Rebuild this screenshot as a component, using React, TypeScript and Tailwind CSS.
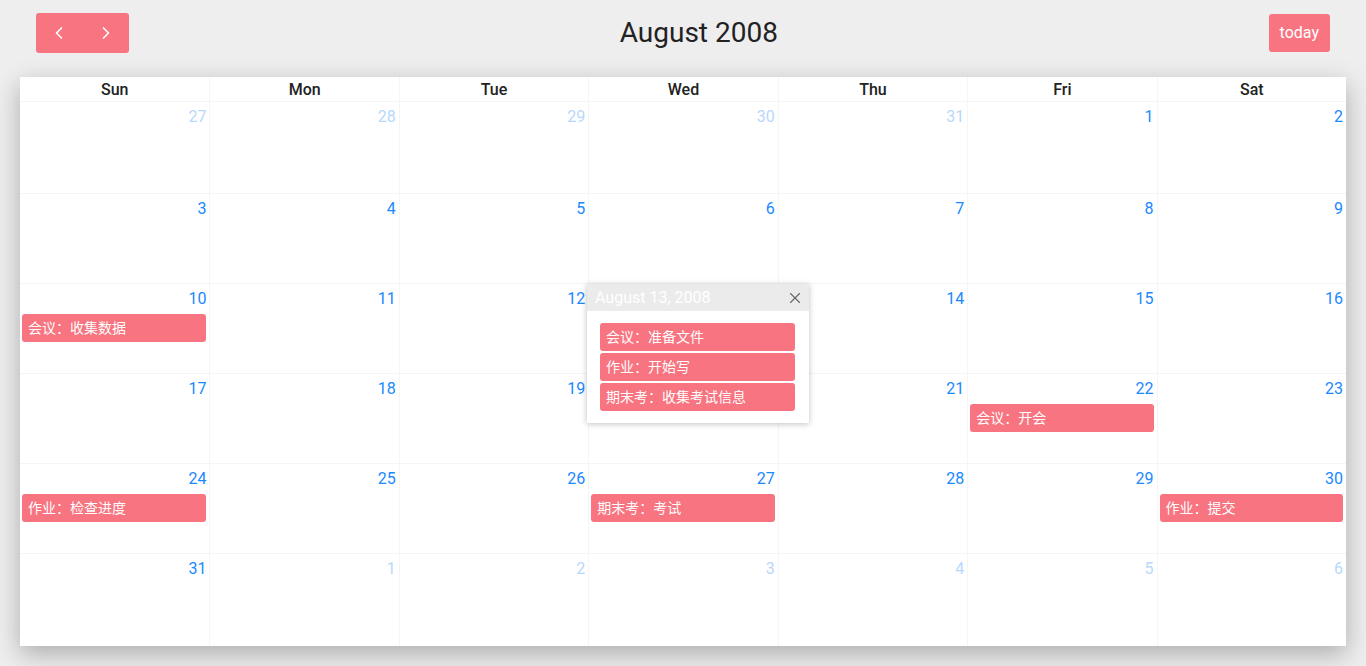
import React from 'react';
import { ChevronLeft, ChevronRight, X } from 'lucide-react';

type Ev = { title: string };

const weekdays = ['Sun', 'Mon', 'Tue', 'Wed', 'Thu', 'Fri', 'Sat'];

// 6 weeks, starting Sun Jul 27 2008
const weeks: { day: number; other: boolean }[][] = (() => {
  const out: { day: number; other: boolean }[][] = [];
  const start = [27, 28, 29, 30, 31];
  let cells: { day: number; other: boolean }[] = start.map((d) => ({ day: d, other: true }));
  for (let d = 1; d <= 31; d++) cells.push({ day: d, other: false });
  let n = 1;
  while (cells.length < 42) cells.push({ day: n++, other: true });
  for (let i = 0; i < 6; i++) out.push(cells.slice(i * 7, i * 7 + 7));
  return out;
})();

const events: Record<number, Ev[]> = {
  10: [{ title: '会议：收集数据' }],
  22: [{ title: '会议：开会' }],
  24: [{ title: '作业：检查进度' }],
  27: [{ title: '期末考：考试' }],
  30: [{ title: '作业：提交' }],
};

const popEvents = ['会议：准备文件', '作业：开始写', '期末考：收集考试信息'];

function EventChip({ title }: { title: string }) {
  return (
    <div className="ml-[2px] mr-[3px] h-[28px] rounded-[3px] bg-[#f77480] pl-[6px] text-[14px] leading-[28px] text-white whitespace-nowrap overflow-hidden">
      {title}
    </div>
  );
}

export default function App() {
  return (
    <div
      className="min-h-[666px] w-full bg-[#eeeeee] px-[20px] pt-[13px]"
      style={{ fontFamily: 'Roboto, "Noto Sans CJK SC", sans-serif' }}
    >
      {/* toolbar */}
      <div className="flex h-[40px] items-center justify-between">
        <div className="ml-[16px] flex h-[40px] w-[93px] overflow-hidden rounded-[3px] bg-[#f77480]">
          <button className="flex flex-1 items-center justify-center text-white">
            <ChevronLeft className="h-[20px] w-[20px]" strokeWidth={2} />
          </button>
          <button className="flex flex-1 items-center justify-center text-white">
            <ChevronRight className="h-[20px] w-[20px]" strokeWidth={2} />
          </button>
        </div>
        <h1 className="text-[28px] text-[#222] leading-none">August 2008</h1>
        <button className="mr-[16px] h-[38px] rounded-[3px] bg-[#f77480] px-[11px] text-[16px] text-white">
          today
        </button>
      </div>

      {/* calendar */}
      <div className="relative mt-[24px] h-[569px] bg-white shadow-[0_8px_24px_rgba(0,0,0,0.28)]">
        <div className="grid h-[25px] grid-cols-7 border-b border-[#f5f5f5]">
          {weekdays.map((w, i) => (
            <div
              key={w}
              className={`text-center text-[16px] font-medium leading-[26px] text-[#222] ${i > 0 ? 'border-l border-[#f5f5f5]' : ''}`}
            >
              {w}
            </div>
          ))}
        </div>
        <div className="grid h-[544px] grid-rows-[91px_90px_90px_90px_90px_1fr]">
          {weeks.map((wk, r) => (
            <div key={r} className={`grid grid-cols-7 ${r > 0 ? 'border-t border-[#f5f5f5]' : ''}`}>
              {wk.map((c, i) => (
                <div key={i} className={`${i > 0 ? 'border-l border-[#f5f5f5]' : ''}`}>
                  <div
                    className={`pr-[3px] pt-[5px] text-right text-[16px] leading-[20px] ${c.other ? 'text-[#b8d8fb]' : 'text-[#1a88ff]'}`}
                  >
                    {c.day}
                  </div>
                  {!c.other && events[c.day] && (
                    <div className="mt-[5px] flex flex-col gap-[2px]">
                      {events[c.day].map((e) => (
                        <EventChip key={e.title} title={e.title} />
                      ))}
                    </div>
                  )}
                </div>
              ))}
            </div>
          ))}
        </div>

        {/* more-events popover */}
        <div className="absolute left-[567px] top-[207px] w-[222px] bg-white shadow-[0_1px_6px_rgba(0,0,0,0.25)]">
          <div className="flex h-[27px] items-center justify-between bg-[#ebebeb] pl-[8px] pr-[5px]">
            <span className="text-[16px] text-white">August 13, 2008</span>
            <X className="h-[18px] w-[18px] text-[#666]" strokeWidth={1.5} />
          </div>
          <div className="flex flex-col gap-[2px] px-[11px] py-[12px]">
            {popEvents.map((t) => (
              <EventChip key={t} title={t} />
            ))}
          </div>
        </div>
      </div>
    </div>
  );
}
